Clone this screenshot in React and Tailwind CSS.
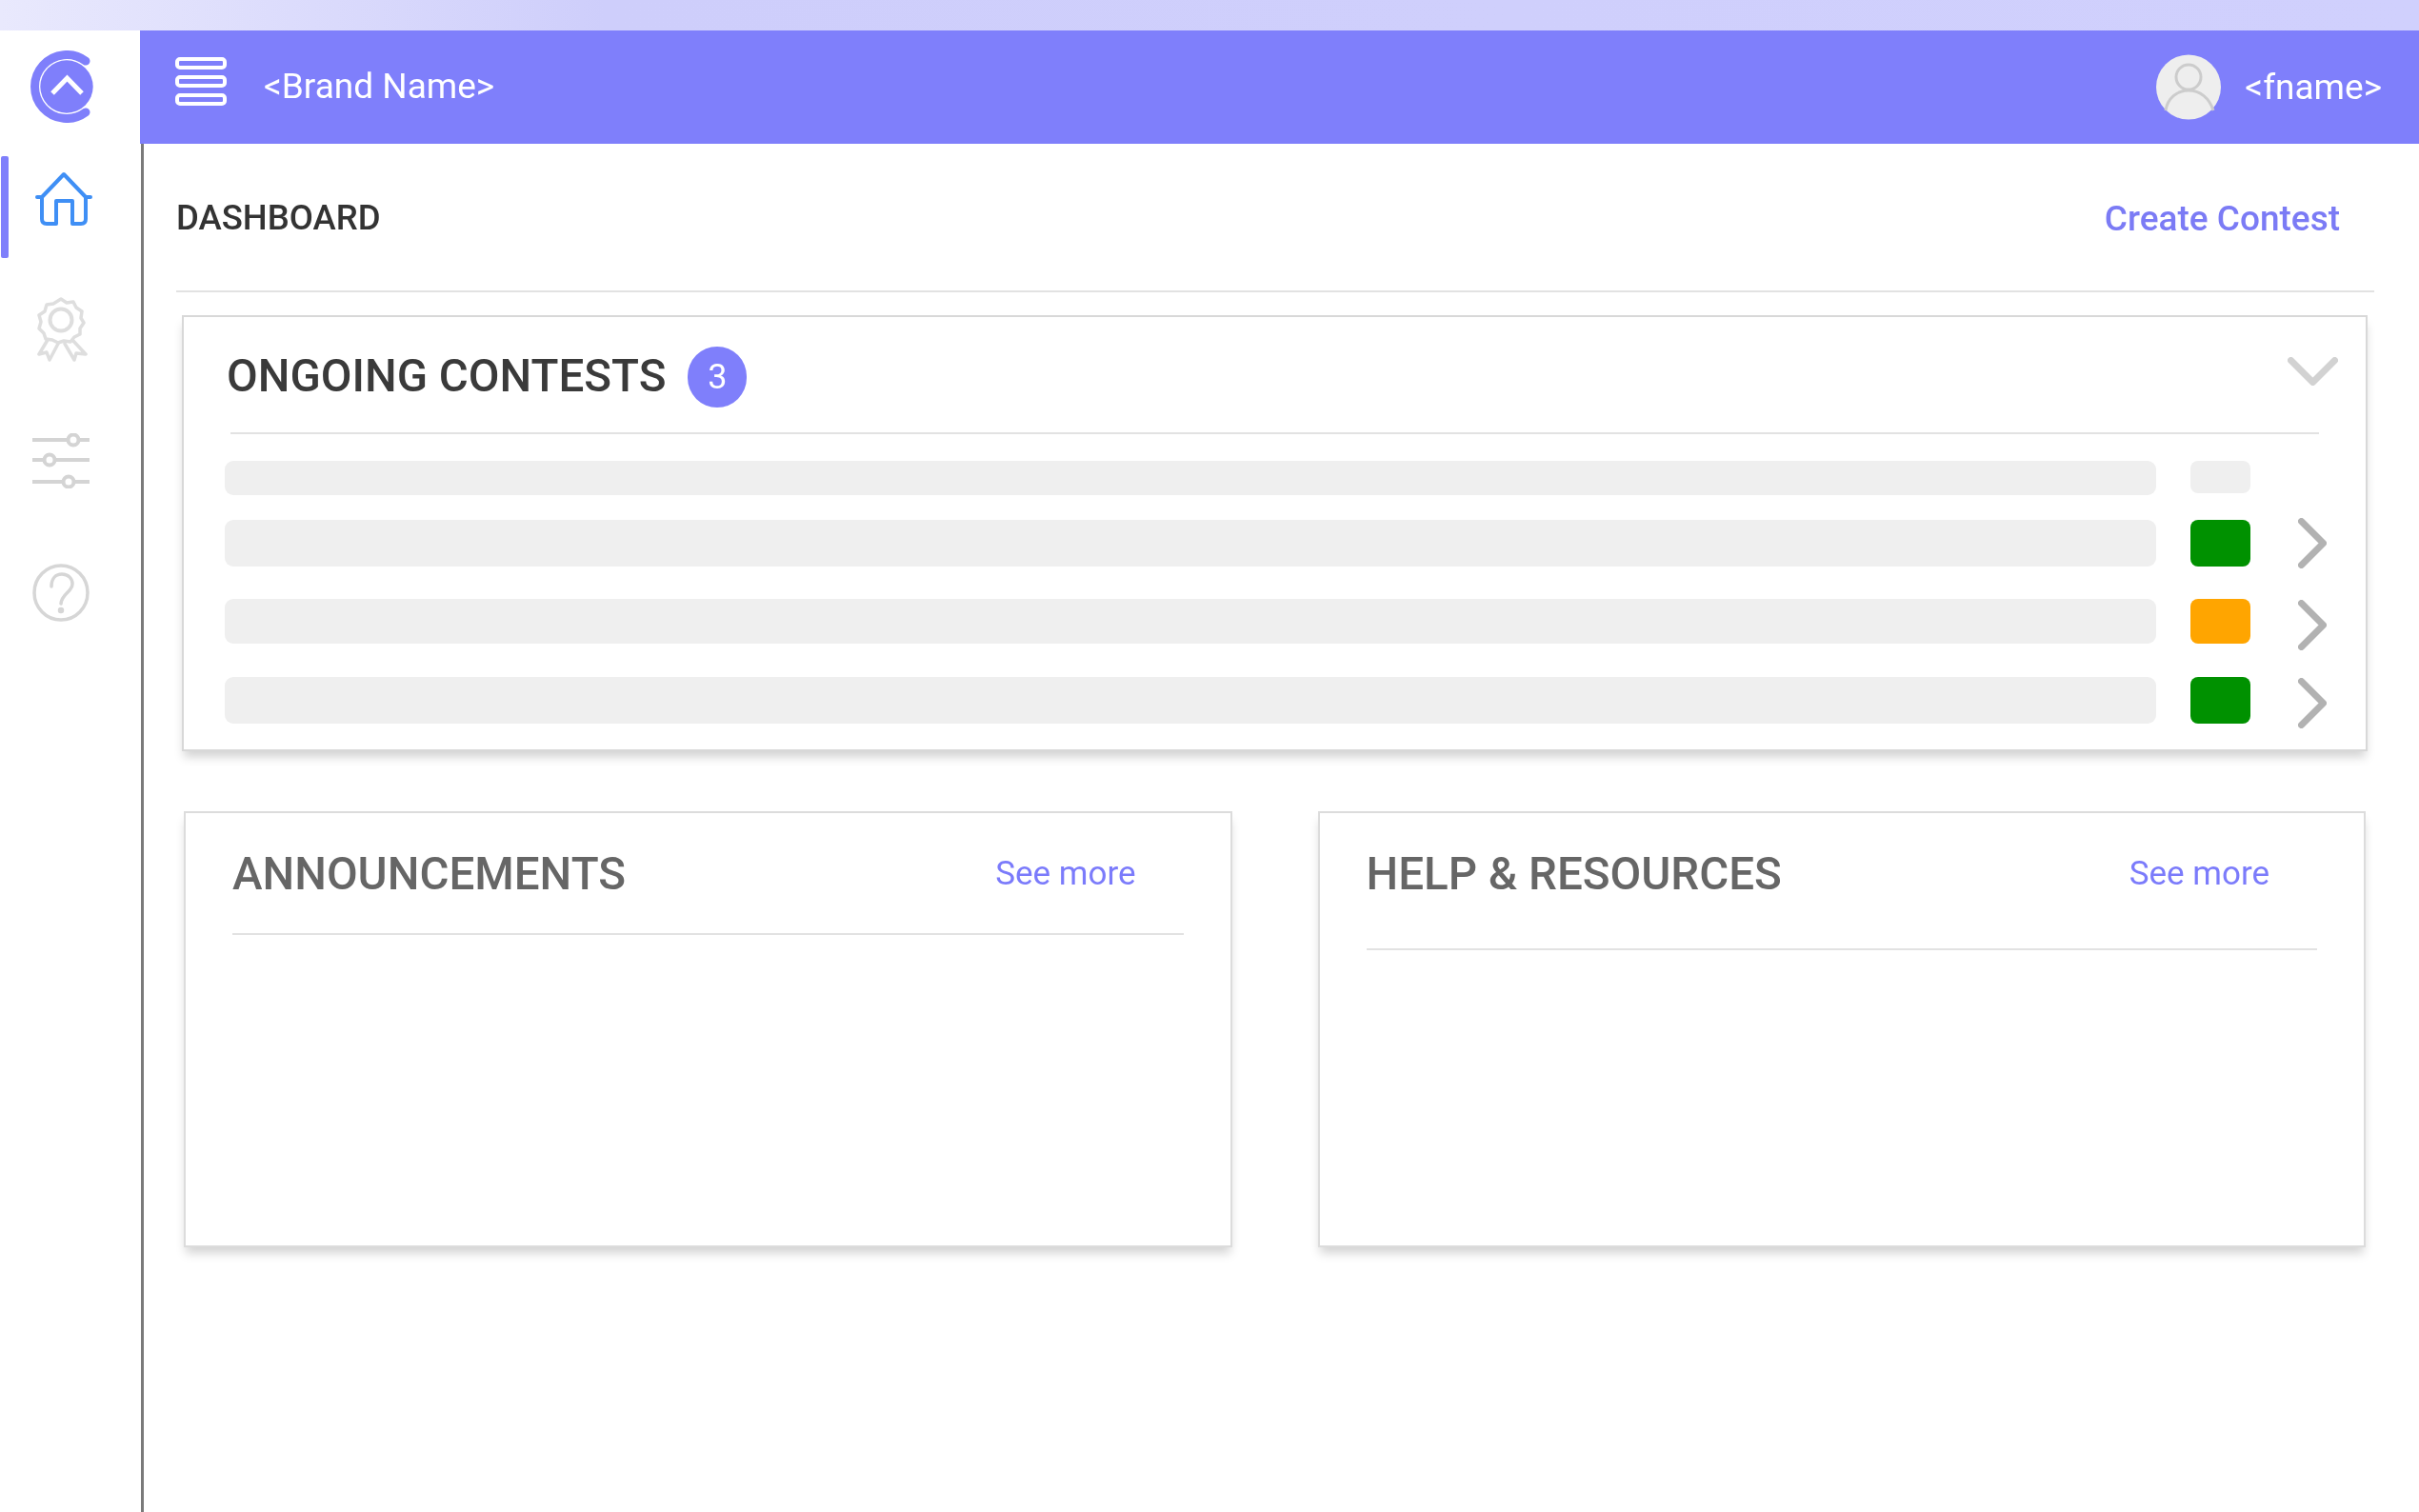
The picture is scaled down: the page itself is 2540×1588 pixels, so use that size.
import React from "react";

const Logo = () => (
  <svg viewBox="0 0 67 76" className="w-[67px] h-[76px]">
    <path d="M58 11.1 A33.5 33.5 0 1 0 58 64.9" fill="none" stroke="#7f7ffb" strokeWidth="9" strokeLinecap="round" />
    <circle cx="38" cy="38" r="27.7" fill="#7f7ffb" />
    <path d="M23 45 L38.5 29 L54 45" fill="none" stroke="#ffffff" strokeWidth="5" strokeLinejoin="miter" />
  </svg>
);

const HomeIcon = () => (
  <svg viewBox="0 0 60 57" className="w-[60px] h-[57px]" fill="none" stroke="#3f8ff5" strokeWidth="4" strokeLinecap="round" strokeLinejoin="round">
    <path d="M2 27 H7 L30 3 L53 27 H58" />
    <path d="M7 27 V50 Q7 55 12 55 H22 V31 H39 V55 H48 Q53 55 53 50 V27" />
  </svg>
);

const AwardIcon = () => (
  <svg viewBox="0 0 54 68" className="w-[54px] h-[68px]" fill="none" stroke="#dedede" strokeWidth="3.5" strokeLinecap="round" strokeLinejoin="round">
    <path d="M26 2 L32 6 L39 5 L42 11 L48 15 L47 22 L50 27 L46 33 L46 39 L40 42 L36 47 L29 46 L23 48 L17 45 L10 44 L8 38 L3 33 L5 26 L3 19 L9 15 L11 8 L18 7 Z" />
    <circle cx="26" cy="24" r="11.5" strokeWidth="4" />
    <path d="M12 45 L3 60 L11 58 L14 66 L23 49" />
    <path d="M38 45 L52 60 L42 59 L40 66 L30 49" />
  </svg>
);

const SlidersIcon = () => (
  <svg viewBox="0 0 60 58" className="w-[60px] h-[58px]" fill="none" stroke="#d4d4d4" strokeWidth="4">
    <path d="M0 7 H37 M49 7 H60" />
    <circle cx="43" cy="7" r="5.5" />
    <path d="M0 28 H12 M24 28 H60" />
    <circle cx="18" cy="28" r="5.5" />
    <path d="M0 51 H32 M44 51 H60" />
    <circle cx="38" cy="51" r="5.5" />
  </svg>
);

const HelpIcon = () => (
  <svg viewBox="0 0 60 61" className="w-[60px] h-[61px]" fill="none" stroke="#d6d6d6" strokeWidth="3.5" strokeLinecap="round">
    <ellipse cx="30" cy="30.5" rx="28" ry="28.5" />
    <path d="M20 24 C20 15 25 11 31 11 C38 11 42 16 42 21 C42 30 31 31 30 42" />
    <circle cx="30" cy="49" r="1.5" fill="#d6d6d6" />
  </svg>
);

const MenuIcon = () => (
  <div className="flex flex-col gap-[6px] w-[54px] mb-[13px]">
    <div className="h-[13px] rounded-[5px] border-[4px] border-white" />
    <div className="h-[13px] rounded-[5px] border-[4px] border-white" />
    <div className="h-[13px] rounded-[5px] border-[4px] border-white" />
  </div>
);

const Avatar = () => (
  <svg viewBox="0 0 68 69" className="w-[68px] h-[69px]">
    <circle cx="34" cy="34.5" r="34" fill="#eeeeee" />
    <circle cx="34" cy="24" r="13" fill="none" stroke="#cccccc" strokeWidth="3" />
    <path d="M10 59 C12 46 22 38 34 38 C46 38 56 46 60 59" fill="none" stroke="#cccccc" strokeWidth="3" />
  </svg>
);

const ChevronRight = ({ className }) => (
  <svg viewBox="0 0 30 53" className={"w-[30px] h-[53px] " + className} fill="none" stroke="#b2b2b2" strokeWidth="7" strokeLinecap="round" strokeLinejoin="round">
    <path d="M3.5 3.5 L26.5 26.5 L3.5 49.5" />
  </svg>
);

const rows = [
  { mt: "mt-[28px]", bar: "h-[36px]", status: "h-[34px] self-start bg-[#efefef]", chev: null },
  { mt: "mt-[26px]", bar: "h-[49px]", status: "h-[49px] bg-[#009100]", chev: "-my-[2px]" },
  { mt: "mt-[34px]", bar: "h-[47px]", status: "h-[47px] bg-[#ffa500]", chev: "-mb-[4px] -mt-[2px] translate-y-[3px]" },
  { mt: "mt-[35px]", bar: "h-[49px]", status: "h-[49px] bg-[#009100]", chev: "-my-[2px] translate-y-[3px]" },
];

const SmallCard = ({ title, line }) => (
  <section className="h-[458px] bg-white border-2 border-[#dcdcdc] shadow-[0_8px_10px_-2px_rgba(0,0,0,0.18)]">
    <div className={"flex items-start justify-between mx-[49px] pt-[40px] border-b-2 border-[#e2e2e2] " + line}>
      <h2 className="text-[47.5px] leading-[48px] font-medium text-[#666666]">{title}</h2>
      <a className="text-[35px] leading-[48px] font-normal text-[#7b7bfb] mr-[50px]">See more</a>
    </div>
  </section>
);

export default function App() {
  return (
    <div className="w-[2540px] h-[1588px] overflow-hidden flex flex-col bg-white font-['Roboto',sans-serif] blur-[0.6px]">
      <div className="h-8 bg-[linear-gradient(90deg,#e9e9fd,#cecefb_25%,#d0d0fd)]" />
      <div className="flex-1 flex">
        <aside className="w-[147px] flex flex-col">
          <div className="ml-[32px] mt-[21px]"><Logo /></div>
          <div className="mt-[35px] h-[107px] flex items-start">
            <div className="ml-px w-2 h-full rounded-[2px] bg-[#7f7ffb]" />
            <div className="ml-[28px] mt-[16px]"><HomeIcon /></div>
          </div>
          <div className="ml-[38px] mt-[41px]"><AwardIcon /></div>
          <div className="ml-[34px] mt-[75px]"><SlidersIcon /></div>
          <div className="ml-[34px] mt-[79px]"><HelpIcon /></div>
        </aside>
        <div className="flex-1 flex flex-col">
          <header className="h-[119px] bg-[#7f7ffb] flex items-center text-white">
            <div className="ml-[37px]"><MenuIcon /></div>
            <span className="ml-[39px] text-[37px] leading-none -mt-[3px]">&lt;Brand Name&gt;</span>
            <div className="ml-auto mr-[39px] flex items-center">
              <Avatar />
              <span className="ml-[25px] text-[37px] leading-none">&lt;fname&gt;</span>
            </div>
          </header>
          <main className="flex-1 border-l-[3px] border-[#7a7a7a] ml-px pl-[34px] pr-[47px]">
            <div className="h-[156px] flex items-center justify-between border-b-2 border-[#e2e2e2]">
              <h1 className="text-[36.5px] font-medium text-[#333333] mt-[2px]">DASHBOARD</h1>
              <a className="text-[37px] font-medium text-[#7b7bf5] mr-[36px] mt-[4px]">Create Contest</a>
            </div>
            <section className="mt-[24px] ml-[6px] mr-[7px] h-[458px] bg-white border-2 border-[#d8d8d8] shadow-[0_8px_10px_-2px_rgba(0,0,0,0.18)]">
              <div className="mx-[49px] h-[123px] flex items-center justify-between border-b-2 border-[#e2e2e2]">
                <div className="flex items-center -ml-[4px] mt-[5px]">
                  <h2 className="text-[47.5px] leading-none font-medium text-[#3a3a3a]">ONGOING CONTESTS</h2>
                  <span className="ml-[23px] w-[62px] h-[64px] rounded-full bg-[#7f7ffb] flex items-center justify-center text-[36px] text-white">3</span>
                </div>
                <svg viewBox="0 0 53 30" className="w-[53px] h-[30px] -mr-[20px] -mt-[8px]" fill="none" stroke="#d2d2d2" strokeWidth="7" strokeLinecap="round" strokeLinejoin="round">
                  <path d="M3.5 3.5 L26.5 26.5 L49.5 3.5" />
                </svg>
              </div>
              {rows.map((r, i) => (
                <div key={i} className={"flex items-center pl-[43px] pr-[41px] " + r.mt}>
                  <div className={"flex-1 rounded-[9px] bg-[#efefef] " + r.bar} />
                  <div className={"ml-[36px] w-[63px] rounded-[8px] " + r.status} />
                  <div className="ml-[50px] w-[30px] flex items-center">
                    {r.chev !== null && <ChevronRight className={r.chev} />}
                  </div>
                </div>
              ))}
            </section>
            <div className="mt-[63px] ml-[8px] mr-[9px] grid grid-cols-2 gap-[90px]">
              <SmallCard title="ANNOUNCEMENTS" line="h-[128px]" />
              <SmallCard title="HELP & RESOURCES" line="h-[144px]" />
            </div>
          </main>
        </div>
      </div>
    </div>
  );
}
